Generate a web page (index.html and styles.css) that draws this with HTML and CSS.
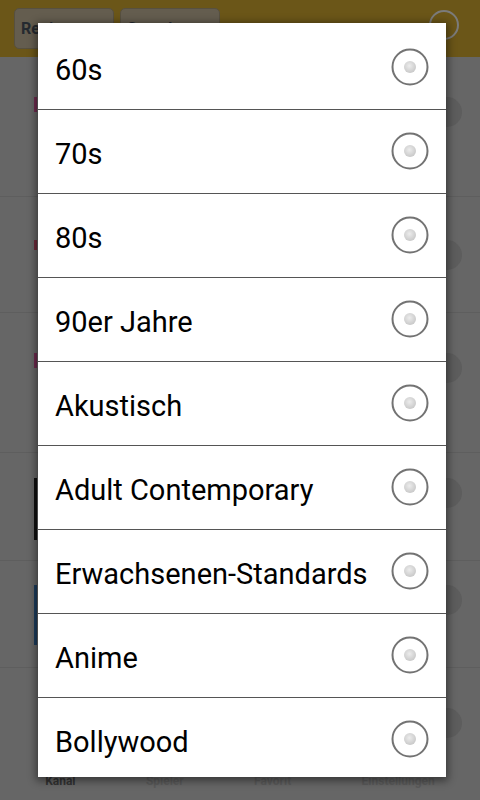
FILE: index.html
```html
<!DOCTYPE html>
<html lang="de">
<head>
<meta charset="utf-8">
<title>Genre</title>
<link rel="stylesheet" href="styles.css">
</head>
<body>
<div class="app">
  <header class="topbar">
    <div class="tbtn">Regionen</div>
    <div class="tbtn">Sprachen</div>
    <div class="spacer"></div>
    <div class="tcircle"></div>
  </header>
  <main class="list">
    <div class="row r1"><span class="bar magenta"></span><span class="dot"></span></div>
    <div class="row r2"><span class="bar red"></span><span class="dot"></span></div>
    <div class="row r3"><span class="bar magenta"></span><span class="dot"></span></div>
    <div class="row r4"><span class="bar black"></span><span class="dot"></span></div>
    <div class="row r5"><span class="bar blue"></span><span class="dot"></span></div>
    <div class="row r6"><span class="bar none"></span><span class="dot"></span></div>
  </main>
  <nav class="bottomnav">
    <span class="nav active">Kanal</span>
    <span class="nav">Spieler</span>
    <span class="nav">Favorit</span>
    <span class="nav">Einstellungen</span>
  </nav>
</div>

<div class="dialog">
  <ul class="options">
    <li class="opt"><span class="label">60s</span><svg class="radio" viewBox="0 0 40 40"><defs><radialGradient id="g" cx="45%" cy="40%" r="60%"><stop offset="0" stop-color="#ececec"/><stop offset="1" stop-color="#c9c9c9"/></radialGradient></defs><circle cx="20" cy="20" r="17.5" fill="#fff" stroke="#737373" stroke-width="2"/><circle cx="20" cy="20" r="6" fill="url(#g)"/></svg></li>
    <li class="opt"><span class="label">70s</span><svg class="radio" viewBox="0 0 40 40"><circle cx="20" cy="20" r="17.5" fill="#fff" stroke="#737373" stroke-width="2"/><circle cx="20" cy="20" r="6" fill="url(#g)"/></svg></li>
    <li class="opt"><span class="label">80s</span><svg class="radio" viewBox="0 0 40 40"><circle cx="20" cy="20" r="17.5" fill="#fff" stroke="#737373" stroke-width="2"/><circle cx="20" cy="20" r="6" fill="url(#g)"/></svg></li>
    <li class="opt"><span class="label">90er Jahre</span><svg class="radio" viewBox="0 0 40 40"><circle cx="20" cy="20" r="17.5" fill="#fff" stroke="#737373" stroke-width="2"/><circle cx="20" cy="20" r="6" fill="url(#g)"/></svg></li>
    <li class="opt"><span class="label">Akustisch</span><svg class="radio" viewBox="0 0 40 40"><circle cx="20" cy="20" r="17.5" fill="#fff" stroke="#737373" stroke-width="2"/><circle cx="20" cy="20" r="6" fill="url(#g)"/></svg></li>
    <li class="opt"><span class="label">Adult Contemporary</span><svg class="radio" viewBox="0 0 40 40"><circle cx="20" cy="20" r="17.5" fill="#fff" stroke="#737373" stroke-width="2"/><circle cx="20" cy="20" r="6" fill="url(#g)"/></svg></li>
    <li class="opt"><span class="label">Erwachsenen-Standards</span><svg class="radio" viewBox="0 0 40 40"><circle cx="20" cy="20" r="17.5" fill="#fff" stroke="#737373" stroke-width="2"/><circle cx="20" cy="20" r="6" fill="url(#g)"/></svg></li>
    <li class="opt"><span class="label">Anime</span><svg class="radio" viewBox="0 0 40 40"><circle cx="20" cy="20" r="17.5" fill="#fff" stroke="#737373" stroke-width="2"/><circle cx="20" cy="20" r="6" fill="url(#g)"/></svg></li>
    <li class="opt"><span class="label">Bollywood</span><svg class="radio" viewBox="0 0 40 40"><circle cx="20" cy="20" r="17.5" fill="#fff" stroke="#737373" stroke-width="2"/><circle cx="20" cy="20" r="6" fill="url(#g)"/></svg></li>
  </ul>
</div>
</body>
</html>
```

FILE: styles.css
```css
* { box-sizing: border-box; }
html, body { margin: 0; padding: 0; }
body {
  width: 480px;
  height: 800px;
  overflow: hidden;
  background: #666666;
  font-family: Roboto, "Noto Sans", sans-serif;
  position: relative;
}

.app {
  display: flex;
  flex-direction: column;
  height: 800px;
}

.topbar {
  height: 57px;
  background: #6b5618;
  display: flex;
  align-items: center;
  padding: 0 14px;
  gap: 6px;
}
.tbtn {
  width: 100px;
  height: 41px;
  border-radius: 5px;
  background: #645d4f;
  border: 1px solid #57503f;
  color: #252a30;
  font-weight: bold;
  font-size: 16px;
  line-height: 39px;
  padding-left: 6px;
  overflow: hidden;
  white-space: nowrap;
}
.spacer { flex: 1; }
.tcircle {
  width: 30px;
  height: 30px;
  border-radius: 50%;
  border: 2px solid #7b7b7b;
  margin-right: 7px;
  margin-top: -8px;
}

.list { flex: 1; display: flex; flex-direction: column; }
.row {
  display: flex;
  align-items: flex-start;
  justify-content: space-between;
  border-bottom: 1px solid #5e5e5e;
  padding: 40px 18px 0 34px;
}
.r1 { height: 140px; }
.r2 { height: 116px; padding-top: 43px; }
.r3 { height: 140px; }
.r4 { height: 108px; padding-top: 25px; }
.r5 { height: 107px; padding-top: 24px; }
.r6 { flex: 1; border-bottom: none; }
.bar { width: 3px; height: 15px; }
.magenta { background: #6e2a4e; }
.red { background: #6e2a3a; height: 10px; }
.black { background: #111; height: 62px; }
.blue { background: #1c3c5c; height: 60px; }
.none { background: transparent; }
.dot {
  width: 30px;
  height: 30px;
  border-radius: 50%;
  background: #5d5d5d;
}

.bottomnav {
  height: 30px;
  display: flex;
  justify-content: space-around;
  align-items: flex-start;
  padding: 4px 10px 0 10px;
}
.nav {
  font-size: 12px;
  font-weight: bold;
  color: #5a5a5a;
}
.nav.active { color: #333; }

.dialog {
  position: absolute;
  left: 38px;
  top: 23px;
  width: 408px;
  height: 754px;
  background: #fff;
  overflow: hidden;
  padding-top: 3px;
  box-shadow: 0 2px 8px 2px rgba(0, 0, 0, 0.45);
}
.options { list-style: none; margin: 0; padding: 0; }
.opt {
  height: 84px;
  display: flex;
  align-items: center;
  justify-content: space-between;
  padding: 0 16px 0 17px;
  border-bottom: 1px solid #555;
}
.label {
  font-size: 29px;
  color: #000;
  padding-top: 4px;
}
.radio {
  width: 40px;
  height: 40px;
  margin-top: -2px;
}
```
